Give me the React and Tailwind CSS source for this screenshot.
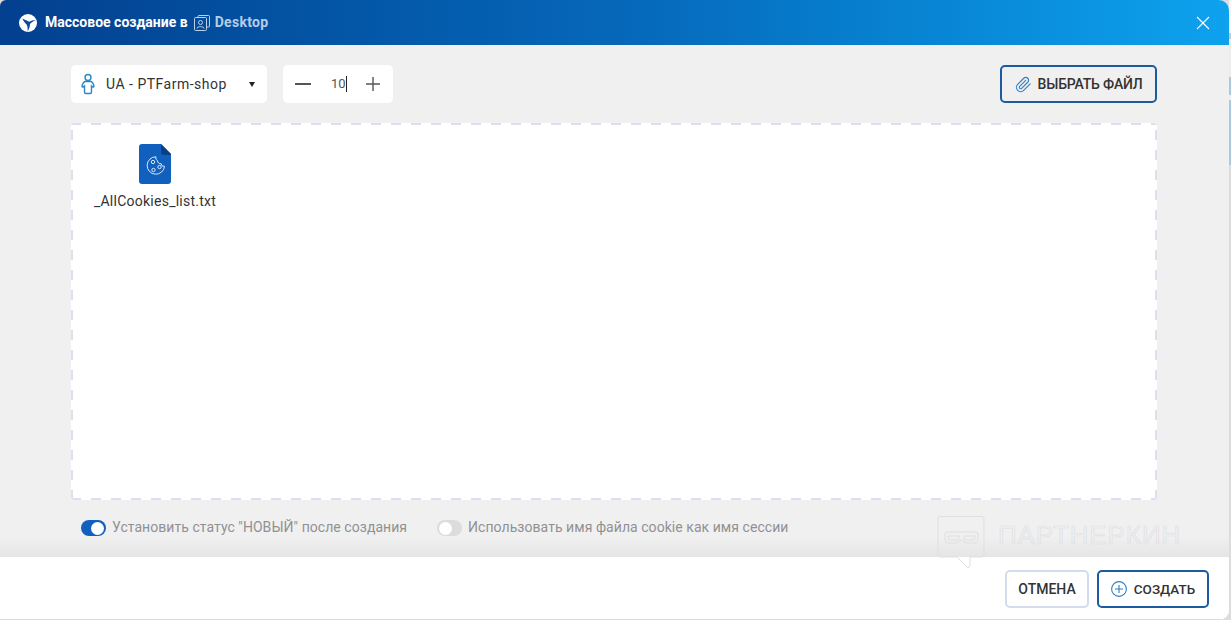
import React from "react";

function Logo() {
  return (
    <svg width="18" height="18" viewBox="0 0 18 18" className="shrink-0">
      <circle cx="9" cy="9" r="9" fill="#fff" />
      <path d="M3.4 4.6 C6 6.4 8.4 6.6 10 7.8 C12 6.8 14.6 5.8 17 6 C14.6 7 12.6 8.4 11 10 C11 12.4 10.2 15 8.6 17.4 C8.8 14.8 8.6 12.4 7.6 10.6 C6 8.8 4.2 7 3.4 4.6 Z" fill="#0a4a9c" />
    </svg>
  );
}

function Cookie() {
  return (
    <svg width="32" height="40" viewBox="0 0 32 40" className="shrink-0">
      <path d="M3 0 H22 L32 10 V37 a3 3 0 0 1 -3 3 H3 a3 3 0 0 1 -3 -3 V3 a3 3 0 0 1 3 -3 Z" fill="#1160bd" />
      <path d="M22 0 L32 10 V11 H25 a3 3 0 0 1 -3 -3 Z" fill="#0b3f85" />
      <g fill="none" stroke="#dbe8f7" strokeWidth="1">
        <path d="M17 12.8 a8.7 8.7 0 1 0 8.5 9.5 a3 3 0 0 1 -3.4 -2.6 a3 3 0 0 1 -3.6 -3 a3 3 0 0 1 -1.5 -3.9 Z" />
        <circle cx="14" cy="18" r="1.7" />
        <circle cx="20.5" cy="23" r="1.7" />
        <circle cx="14.5" cy="26" r="1.7" />
      </g>
    </svg>
  );
}

function Watermark() {
  return (
    <div className="absolute left-[937px] top-[516px] flex items-start gap-[13px] pointer-events-none">
      <svg width="48" height="53" viewBox="0 0 48 53" fill="none" stroke="#dfdfdf" strokeWidth="1">
        <path d="M3 0.5 H45 a2 2 0 0 1 2 2 V39 a2 2 0 0 1 -2 2 H33 V50 a2 2 0 0 1 -3 1 L20 41 H3 a2 2 0 0 1 -2 -2 V2.5 a2 2 0 0 1 2 -2 Z" />
        <path d="M8 18 a2 2 0 0 1 2 -2 H39 a2 2 0 0 1 2 2 V24 a3 3 0 0 1 -3 3 H30 a4 4 0 0 1 -4 -3 H23 a4 4 0 0 1 -4 3 H11 a3 3 0 0 1 -3 -3 Z" />
        <path d="M11 20 H22 V21 a3 3 0 0 1 -3 3 H14 a3 3 0 0 1 -3 -3 Z M27 20 H38 V21 a3 3 0 0 1 -3 3 H30 a3 3 0 0 1 -3 -3 Z" />
      </svg>
      <span className="mt-[6px] text-[26px] leading-[26px] tracking-[0.9px] text-transparent [-webkit-text-stroke:0.7px_#dfdfdf] font-['Liberation_Sans',sans-serif]">
        ПАРТНЕРКИН
      </span>
    </div>
  );
}

export default function App() {
  return (
    <div className="relative flex h-[620px] w-[1231px] overflow-hidden bg-[#dcdcdc] font-['Roboto','Noto_Sans',sans-serif]">
      <div className="flex h-[620px] w-[1229px] shrink-0 flex-col overflow-hidden rounded-tl-[6px] rounded-tr-[10px] rounded-br-[10px] bg-[#f0f0f1]">
        <header className="flex h-[45px] shrink-0 items-center bg-gradient-to-r from-[#03408f] via-[#0667b9] to-[#0ea2ee] pl-[19px] pr-[18px]">
          <Logo />
          <span className="ml-[8px] text-[14px] font-bold text-white">Массовое создание в</span>
          <svg width="18" height="18" viewBox="0 0 18 18" fill="none" stroke="#b9d0ea" strokeWidth="1" className="ml-[5px]">
            <path d="M5 3.5 V2.5 a1 1 0 0 1 1 -1 H15.5 a1 1 0 0 1 1 1 V12 a1 1 0 0 1 -1 1 H14" />
            <rect x="1.5" y="3.5" width="12" height="13" rx="1" />
            <circle cx="7.5" cy="8.5" r="2" />
            <path d="M4 14.5 c0 -2.5 7 -2.5 7 0" />
          </svg>
          <span className="ml-[4px] text-[14px] font-bold tracking-[0.3px] text-[#b4cde8]">Desktop</span>
          <button className="ml-auto flex h-[16px] w-[16px] items-center justify-center">
            <svg width="14" height="14" viewBox="0 0 14 14" stroke="#fff" strokeWidth="1.1">
              <path d="M1 1 L13 13 M13 1 L1 13" />
            </svg>
          </button>
        </header>

        <main className="flex min-h-0 flex-1 flex-col bg-gradient-to-b from-[#f0f0f1] from-[96%] to-[#e5e5e5] pl-[71px] pr-[72px] pt-[20px]">
          <div className="flex h-[38px] shrink-0 items-center">
            <div className="flex h-[38px] w-[196px] items-center rounded-[5px] bg-white pl-[10px] pr-[12px]">
              <svg width="14" height="22" viewBox="0 0 14 22" fill="none" stroke="#2a86c4" strokeWidth="1.4">
                <circle cx="7" cy="4.5" r="3" />
                <path d="M4 8.5 H10 C11.5 9 13 12 13 13.5 C12.5 14.5 11.5 14 10.5 13 V19 a1.5 1.5 0 0 1 -1.5 1.5 H5 a1.5 1.5 0 0 1 -1.5 -1.5 V13 C2.5 14 1.5 14.5 1 13.5 C1 12 2.5 9 4 8.5 Z" />
              </svg>
              <span className="ml-[11px] text-[14px] tracking-[0.5px] text-[#333]">UA - PTFarm-shop</span>
              <span className="ml-auto h-0 w-0 border-x-[3px] border-t-[5px] border-x-transparent border-t-[#222]" />
            </div>
            <div className="ml-[16px] flex h-[38px] w-[110px] items-center rounded-[5px] bg-white pl-[12px] pr-[13px]">
              <span className="h-[2px] w-[16px] bg-[#555]" />
              <span className="ml-[20px] border-r border-[#222] text-[13px] leading-[16px] text-[#555]">10</span>
              <svg width="14" height="14" viewBox="0 0 14 14" stroke="#555" strokeWidth="1.4" className="ml-auto">
                <path d="M0 7 H14 M7 0 V14" />
              </svg>
            </div>
            <button className="ml-auto flex h-[38px] w-[157px] items-center justify-center gap-[6px] rounded-[5px] border-2 border-[#1b5c9f] text-[14px] font-medium tracking-[-0.2px] text-[#333]">
              <svg width="17" height="17" viewBox="0 0 24 24" fill="none" stroke="#2f7fc4" strokeWidth="1.6" strokeLinecap="round" strokeLinejoin="round">
                <path d="M21.44 11.05l-9.19 9.19a6 6 0 0 1-8.49-8.49l8.57-8.57A4 4 0 1 1 18 8.84l-8.59 8.57a2 2 0 0 1-2.83-2.83l8.49-8.48" />
              </svg>
              ВЫБРАТЬ ФАЙЛ
            </button>
          </div>

          <section className="mt-[20px] h-[377px] shrink-0 rounded-[4px] bg-white bg-no-repeat pl-[22px] pt-[21px] [background-image:repeating-linear-gradient(90deg,#dcdfef_0_10px,transparent_10px_20px),repeating-linear-gradient(90deg,#dcdfef_0_10px,transparent_10px_20px),repeating-linear-gradient(0deg,#dcdfef_0_10px,transparent_10px_20px),repeating-linear-gradient(0deg,#dcdfef_0_10px,transparent_10px_20px)] [background-size:100%_2px,100%_2px,2px_100%,2px_100%] [background-position:0_0,0_100%,0_0,100%_0]">
            <div className="flex w-[124px] flex-col items-center">
              <Cookie />
              <span className="mt-[8px] text-[14px] leading-[18px] tracking-[0.25px] text-[#333]">_AllCookies_list.txt</span>
            </div>
          </section>

          <div className="ml-[10px] mt-[19px] flex h-[18px] shrink-0 items-center text-[14px] tracking-[0.05px] text-[#919191]">
            <span className="flex h-[16px] w-[25px] items-center justify-end rounded-full bg-[#1160bd] pr-[2px]">
              <span className="h-[13px] w-[13px] rounded-full bg-white" />
            </span>
            <span className="ml-[6px] pb-[2px]">Установить статус "НОВЫЙ" после создания</span>
            <span className="ml-[30px] flex h-[16px] w-[25px] items-center rounded-full bg-[#dcdcdc] pl-[2px]">
              <span className="h-[13px] w-[13px] rounded-full bg-white" />
            </span>
            <span className="ml-[6px] pb-[2px]">Использовать имя файла cookie как имя сессии</span>
          </div>
        </main>

        <footer className="flex h-[63px] shrink-0 items-start justify-end gap-[8px] border-b border-[#d9d9d9] bg-white pr-[20px] pt-[13px]">
          <button className="flex h-[38px] w-[84px] items-center justify-center rounded-[5px] border-2 border-[#d3dcec] text-[14px] font-medium text-[#333]">
            ОТМЕНА
          </button>
          <button className="flex h-[38px] w-[112px] items-center justify-center gap-[7px] rounded-[5px] border-2 border-[#1b5c9f] text-[13.5px] font-medium text-[#333]">
            <svg width="16" height="16" viewBox="0 0 16 16" fill="none" stroke="#2f7fc4" strokeWidth="1.1">
              <circle cx="8" cy="8" r="7.4" />
              <path d="M8 4 V12 M4 8 H12" />
            </svg>
            СОЗДАТЬ
          </button>
        </footer>
      </div>
      <div className="flex w-[2px] shrink-0 flex-col">
        <div className="h-[33px] bg-[#f4f4f4]" />
        <div className="h-[6px] bg-[#c9c9c9]" />
        <div className="h-[38px] bg-[#ececec]" />
        <div className="h-[18px] bg-[#a9c9de]" />
        <div className="h-[5px] bg-[#f0f0f0]" />
        <div className="h-[65px] bg-[#a9c9de]" />
        <div className="flex-1 bg-[#dcdcdc]" />
      </div>
      <Watermark />
    </div>
  );
}
